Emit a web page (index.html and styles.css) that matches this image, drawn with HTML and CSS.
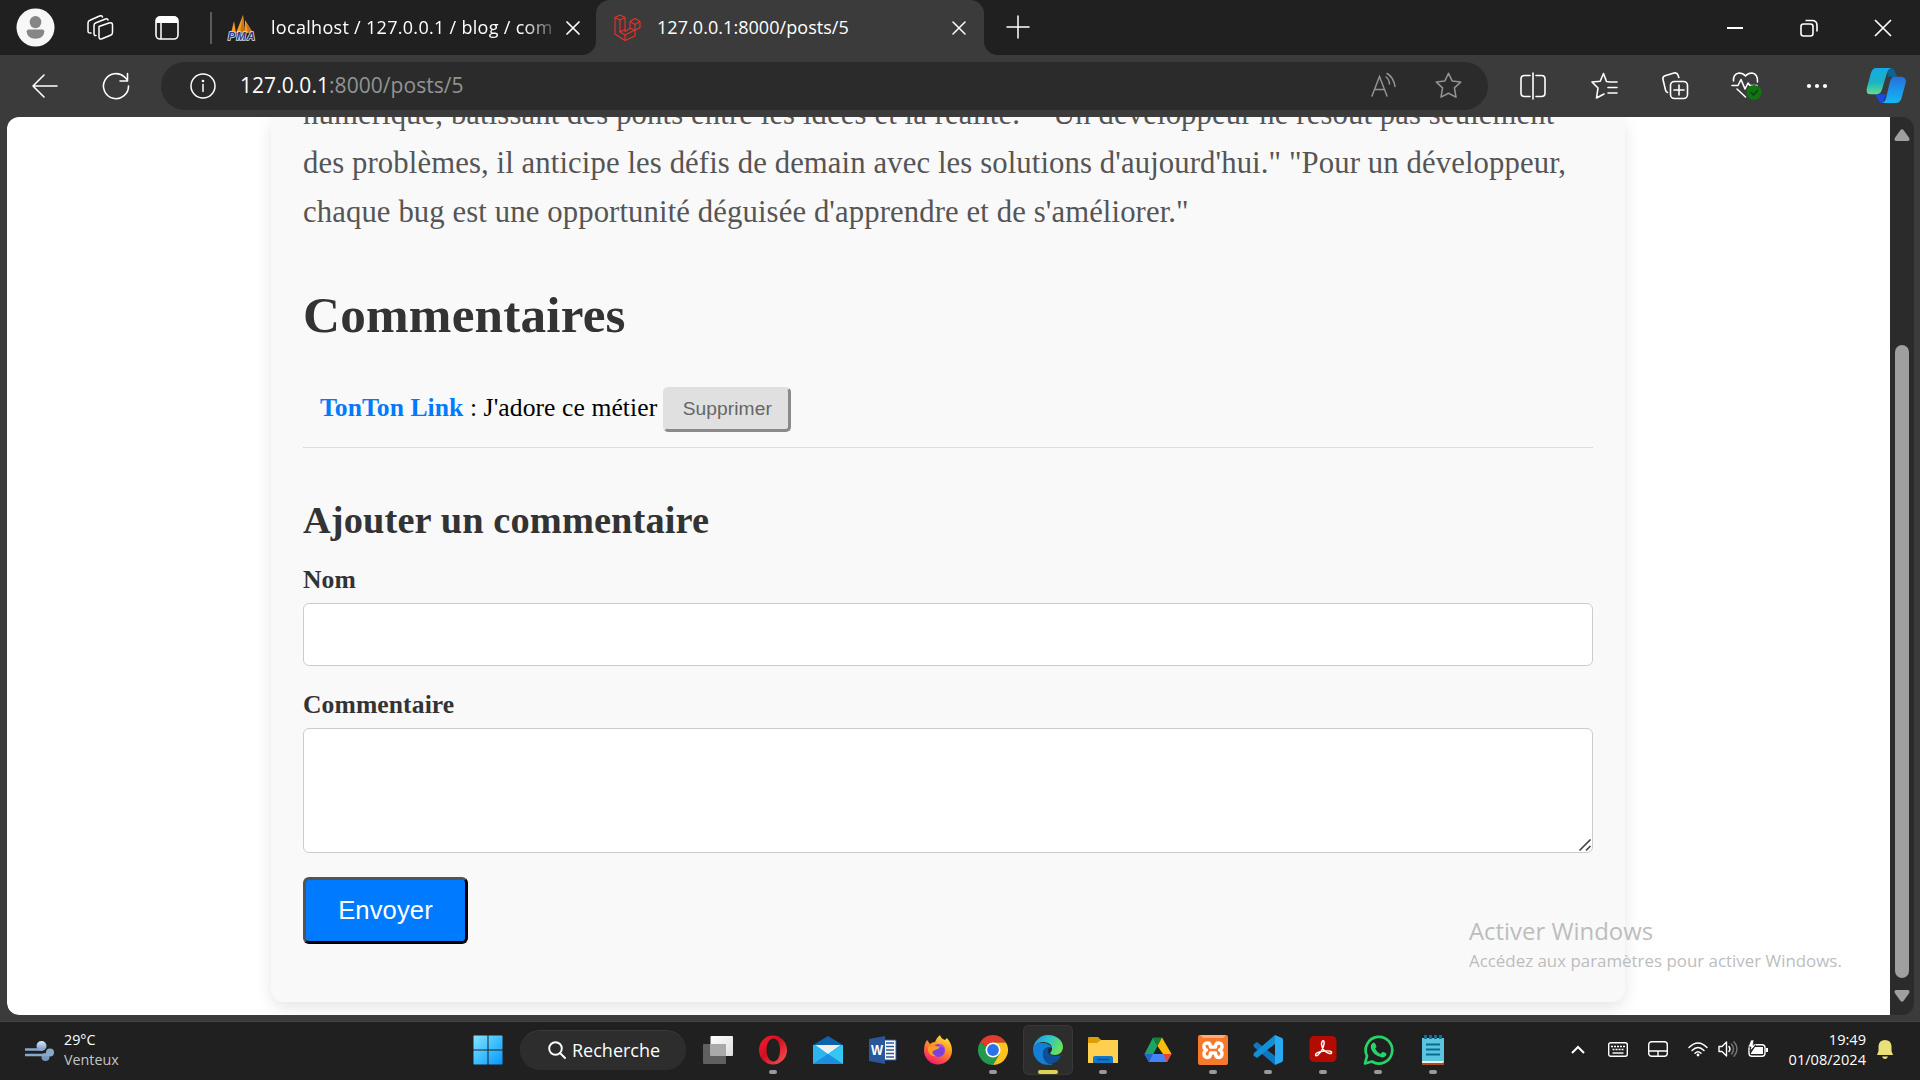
FILE: index.html
```html
<!DOCTYPE html>
<html lang="fr">
<head>
<meta charset="utf-8">
<title>127.0.0.1:8000/posts/5</title>
<link rel="stylesheet" href="styles.css">
</head>
<body>
<div class="screen">
  <header class="tabstrip">
    <div class="tabstrip-tools">
      <svg class="avatar" viewBox="0 0 40 47" width="39" height="39" preserveAspectRatio="none"><ellipse cx="20" cy="23.500" rx="19.500" ry="23" fill="#f7f7f7"/><ellipse cx="20" cy="17" rx="6" ry="7.500" fill="#868686"/><path d="M11 28q0-2 2-2h14q2 0 2 2c0 6-4 9-9 9s-9-3-9-9z" fill="#868686"/></svg>
      <svg class="tool-workspaces" viewBox="0 0 28 28" width="28" height="28" fill="none" stroke="#fff" stroke-width="1.500" stroke-linejoin="round" stroke-linecap="round"><path d="M13 12.500l10-3.500q3.500-1 3.500 2v7.500q0 2-2 2.700L16 24.800q-3 1-3-2z"/><path d="M10 21.500q-2 .5-2-2V11.500q0-2 2-2.800L19.500 5q2-.7 2.500 1M5 19q-3 .5-3-2V9q0-2 2-2.800L13.500 2q2.500-1 3 1"/></svg>
      <svg class="tool-vertical" viewBox="0 0 24 26" width="24" height="26"><rect x="1" y="2" width="22" height="22" rx="4" fill="none" stroke="#fff" stroke-width="1.600"/><path d="M1 8V6q0-5 5-5h12q5 0 5 5v2z" fill="#fff"/><path d="M6 7v17" stroke="#fff" stroke-width="1.500"/></svg>
      <span class="divider"></span>
    </div>
    <div class="tab">
      <svg viewBox="0 0 28 28" width="28" height="28"><path d="M3 19L6 7l2 12zM8 19L15 1l2 18zM17 19V6l8 13z" fill="#f79a1e"/><path d="M12 19L15 1l2 18zM20 19L18 8l7 11z" fill="#c9761a"/><text x="0" y="26" textLength="27" class="pma">PMA</text></svg>
      <span class="tab-title tab-title-fade">localhost / 127.0.0.1 / blog / com</span>
      <svg viewBox="0 0 14 14" width="14" height="14" stroke="#fff" stroke-width="1.700" stroke-linecap="round"><path d="M1 1l12 12M13 1L1 13"/></svg>
    </div>
    <div class="tab tab-active">
      <svg viewBox="0 0 27 27" width="27" height="27" fill="none" stroke="#e8342b" stroke-width="1.100" stroke-linejoin="round"><path d="M1 3.500L6 1l5 2.500v14l5-3V7.500L21 4.500l5 3v6l-5 3v5.500l-10 4.500L1 20z"/><path d="M1 3.500L6 6l5-2.500M6 6v12l5 3 10-5M11 21v5M16 7.500l5 3 5-3M21 10.500v6l-5-2.500M6 18l5-2.500"/></svg>
      <span class="tab-title">127.0.0.1:8000/posts/5</span>
      <svg class="tab-close" viewBox="0 0 14 14" width="14" height="14" stroke="#fff" stroke-width="1.500" stroke-linecap="round"><path d="M1 1l12 12M13 1L1 13"/></svg>
    </div>
    <svg class="new-tab" viewBox="0 0 24 24" width="24" height="24" stroke="#fff" stroke-width="1.500" stroke-linecap="round"><path d="M12 1v22M1 12h22"/></svg>
    <div class="window-controls">
      <svg viewBox="0 0 16 16" width="16" height="16" stroke="#fff" stroke-width="2"><path d="M0 8h16"/></svg>
      <svg viewBox="0 0 16 16" width="16" height="16" fill="none" stroke="#fff" stroke-width="1.600"><rect x="0" y="4" width="12" height="12" rx="2.500"/><path d="M4.500 0.500H11q5 0 5 5v6"/></svg>
      <svg viewBox="0 0 16 16" width="16" height="16" stroke="#fff" stroke-width="1.700"><path d="M0 0l16 16M16 0L0 16"/></svg>
    </div>
  </header>

  <nav class="toolbar">
    <svg class="back" viewBox="0 0 26 24" width="26" height="24" fill="none" stroke="#fff" stroke-width="1.600" stroke-linecap="round" stroke-linejoin="round"><path d="M25 12H1M12 1L1 12l11 11"/></svg>
    <svg class="reload" viewBox="0 0 28 28" width="28" height="28" fill="none" stroke="#fff" stroke-width="1.600" stroke-linecap="round" stroke-linejoin="round"><path d="M26.500 14A12.500 12.500 0 1 1 22.500 5l3 3M25.500 1.500V9H18"/></svg>
    <div class="omnibox">
      <svg viewBox="0 0 26 26" width="26" height="26" fill="none" stroke="#fff" stroke-width="1.500"><circle cx="13" cy="13" r="12"/><path d="M13 11.500v7" stroke-linecap="round"/><circle cx="13" cy="8" r=".6" fill="#fff"/></svg>
      <span class="url"><b>127.0.0.1</b>:8000/posts/5</span>
      <svg class="read" viewBox="0 0 26 26" width="26" height="26" fill="none" stroke="#939393" stroke-width="1.500" stroke-linecap="round"><path d="M1 23L8.500 3.500 16 23M3.500 16.500h10M15 4q3 2 3.500 7M16 .500q6.500 3.500 8 13"/></svg>
      <svg class="star" viewBox="0 0 26 26" width="27" height="27" fill="none" stroke="#939393" stroke-width="1.500" stroke-linejoin="round"><path d="M13 1.200l3.500 7.400 8.200 1.100-6 5.600 1.500 8.900L13 20.500l-7.200 3.700 1.500-8.900-6-5.600 8.200-1.100z"/></svg>
    </div>
    <div class="toolbar-actions">
      <span class="action"><svg viewBox="0 0 28 28" width="28" height="28" fill="none" stroke="#fff" stroke-width="1.600" stroke-linecap="round"><path d="M14 1v26M11 3.500H5.500Q2 3.500 2 7v14q0 3.500 3.500 3.500H11M17 3.500h5.500Q26 3.500 26 7v14q0 3.500-3.500 3.500H17"/></svg></span>
      <span class="action"><svg viewBox="0 0 28 28" width="28" height="28" fill="none" stroke="#fff" stroke-width="1.600" stroke-linecap="round" stroke-linejoin="round"><path d="M20 10l-3.500-.5L13.500 1.500 10.200 9.200 2 10l6 6-1.500 10 7.500-4M19 10h8M18 15.500h9M18 21h9"/></svg></span>
      <span class="action"><svg viewBox="0 0 28 28" width="28" height="28" fill="none" stroke="#fff" stroke-width="1.600" stroke-linecap="round" stroke-linejoin="round"><rect x="9.500" y="9.500" width="17" height="17" rx="4"/><path d="M18 13v10M13 18h10M6.500 20.500q-1.500-.3-2-2.500L2 7.500q-.7-3 2-3.800L13 1q3-.7 4 2l.8 2.500"/></svg></span>
      <span class="action"><svg viewBox="0 0 30 30" width="30" height="30" fill="none" stroke="#fff" stroke-width="1.600" stroke-linecap="round" stroke-linejoin="round"><path d="M2.500 10Q2 3 8 2q4 0 6.500 3Q17 2 21 2q6 1 5.500 9M6 18l8.500 8M1 14.500h6l3-6 4 9.500 3-6 2 2.500h7"/><circle cx="23" cy="21.500" r="7.500" fill="#10750f" stroke="none"/><path d="M20 21.500l2.500 2.500 4-4.500" stroke="#173b17"/></svg></span>
      <span class="action"><svg viewBox="0 0 28 28" width="28" height="28" fill="#fff"><circle cx="6" cy="14" r="2.100"/><circle cx="14" cy="14" r="2.100"/><circle cx="22" cy="14" r="2.100"/></svg></span>
      <svg class="copilot" viewBox="0 0 40 40" width="40" height="39" preserveAspectRatio="none">
        <defs><linearGradient id="cpa" x2="0" y2="1"><stop stop-color="#18a8e8"/><stop offset=".55" stop-color="#19b4c4"/><stop offset="1" stop-color="#64dd8c"/></linearGradient><linearGradient id="cpb" x2="0" y2="1"><stop stop-color="#2670dc"/><stop offset="1" stop-color="#14b8f5"/></linearGradient></defs>
        <path d="M20 2h4q4 0 5 4l2 5h-9z" fill="#0b6591"/><path d="M9 29h11l-3 9q-4 0-5-4z" fill="#1b49dc"/>
        <path d="M10 2h15q-3 1-4 5l-5 17q-1.500 5-6 5H5q-6 0-4-7L5 7q1.500-5 5-5z" fill="url(#cpa)"/><path d="M28 11h7q6 0 4.500 7l-4 15q-1.500 5-6 5H16q3-1 4-5l4-17q1.500-5 4-5z" fill="url(#cpb)"/>
      </svg>
    </div>
  </nav>

  <div class="viewport">
    <main class="page">
      <article class="card">
        <p class="body-text">numérique, bâtissant des ponts entre les idées et la réalité." "Un développeur ne résout pas seulement<br>des problèmes, il anticipe les défis de demain avec les solutions d'aujourd'hui." "Pour un développeur,<br>chaque bug est une opportunité déguisée d'apprendre et de s'améliorer."</p>
        <h1>Commentaires</h1>
        <div class="comment"><span class="comment-text"><strong>TonTon Link</strong> : J'adore ce métier</span><button class="btn-delete">Supprimer</button></div>
        <h3>Ajouter un commentaire</h3>
        <label for="nom">Nom</label>
        <input id="nom" type="text">
        <label class="label-next" for="msg">Commentaire</label>
        <div class="area"><textarea id="msg"></textarea><svg class="grip" viewBox="0 0 12 12" width="12" height="12" stroke="#444" stroke-width="1.700"><path d="M.5 11.500l11-11M7 11.500L11.500 7"/></svg></div>
        <button class="btn-send">Envoyer</button>
      </article>
    </main>
    <div class="scrollbar">
      <svg viewBox="0 0 16 12" width="16" height="12"><path d="M6.500 1q1.500-1.500 3 0l5.700 8q1 3-1.500 3H2.300q-2.500 0-1.500-3z" fill="#9f9f9f"/></svg>
      <span class="thumb"></span>
      <svg viewBox="0 0 16 12" width="16" height="12"><path d="M6.500 11q1.500 1.500 3 0l5.700-8q1-3-1.500-3H2.300Q-.2 0 .8 3z" fill="#9f9f9f"/></svg>
    </div>
  </div>

  <footer class="taskbar">
    <div class="weather">
      <svg viewBox="0 0 30 22" width="30" height="22"><defs><linearGradient id="wx" x2="0" y2="1"><stop stop-color="#d9e6fa"/><stop offset="1" stop-color="#6e93bd"/></linearGradient></defs><circle cx="16.500" cy="6" r="5" fill="url(#wx)"/><circle cx="20.500" cy="17" r="4" fill="#7398b8"/><circle cx="25" cy="12.500" r="4" fill="#8aa9c9"/><path d="M0 9.500h18M0 15h23" stroke="#86a8cc" stroke-width="2.500"/></svg>
      <p><span>29°C</span><span class="dim">Venteux</span></p>
    </div>
    <div class="apps">
      <div class="app"><svg viewBox="0 0 30 30" width="30" height="30"><defs><linearGradient id="win" gradientUnits="userSpaceOnUse" x1="0" y1="0" x2="30" y2="30"><stop stop-color="#8be3ff"/><stop offset=".5" stop-color="#3fc0ff"/><stop offset="1" stop-color="#0794ff"/></linearGradient></defs><path d="M1 .5h13.500v14H.5V1zM15.500.5H29l.5.500v13.500h-14zM.5 15.500h14v14H1l-.5-.5zM15.500 15.500h14V29l-.5.500H15.500z" fill="url(#win)"/></svg></div>
      <div class="search"><svg viewBox="0 0 18 18" width="18" height="18" fill="none" stroke="#fff" stroke-width="1.900" stroke-linecap="round"><circle cx="7.500" cy="7.500" r="6.300"/><path d="M12 12l5 5"/></svg><span>Recherche</span></div>
      <div class="app"><svg viewBox="0 0 30 30" width="30" height="30"><defs><linearGradient id="tv" x2="1" y2="1"><stop stop-color="#fff"/><stop offset="1" stop-color="#ddd"/></linearGradient></defs><rect y="9" width="23" height="20" rx="1" fill="#606060"/><rect x="7.500" y="1" width="22.500" height="20" rx="1" fill="url(#tv)"/><path d="M7.500 9H22q1 0 1 1v11H8.500q-1 0-1-1z" fill="#aaa"/></svg></div>
      <div class="app run"><svg viewBox="0 0 30 30" width="30" height="30"><defs><linearGradient id="op" x2="1" y2="1"><stop stop-color="#ff1b2d"/><stop offset=".45" stop-color="#d00f20"/><stop offset="1" stop-color="#ff5b5b"/></linearGradient></defs><path fill-rule="evenodd" d="M15 .5a14 14.500 0 1 1 0 29a14 14.500 0 1 1 0-29zM15.500 3.500c-4 0-7 5-7 11.500s3 11.500 7 11.500 6.500-5 6.500-11.500-2.500-11.500-6.500-11.500z" fill="url(#op)"/></svg></div>
      <div class="app"><svg viewBox="0 0 30 30" width="30" height="30"><path d="M0 10L15 1l15 9v4H0z" fill="#0c62ad"/><path d="M0 10h30v19H0z" fill="#2bb4ee"/><path d="M2.500 10h25L15 19z" fill="#eee"/><path d="M30 10v19L15 19z" fill="#35c6f4"/><path d="M0 29l15-10L30 29z" fill="#1b8fe0"/></svg></div>
      <div class="app"><svg viewBox="0 0 30 30" width="30" height="30"><path d="M16 5h12v20H16z" fill="#fff" stroke="#2b579a"/><path d="M18 8h8M18 11.500h8M18 15h8M18 18.500h8M18 22h8" stroke="#2b579a" stroke-width="1.500"/><path d="M1 4l16-3v28L1 26z" fill="#2b579a"/><text x="3" y="20" textLength="12" lengthAdjust="spacingAndGlyphs" class="word">W</text></svg></div>
      <div class="app"><svg viewBox="0 0 30 30" width="30" height="30"><defs><linearGradient id="ff" x1=".8" x2=".3" y2="1"><stop stop-color="#fff044"/><stop offset=".4" stop-color="#ff9a20"/><stop offset="1" stop-color="#f5156c"/></linearGradient></defs><path d="M4 5l3 4q2-2 5-2 1-4 5-7 1 4 5 5l2-2q5 6 5 12a14 14 0 0 1-28 1Q1 9 4 5z" fill="url(#ff)"/><circle cx="15.500" cy="15.500" r="6.500" fill="#7a42dc"/><path d="M5 12q5-3 8-1l4 1q-2 3-5 3l-3 2q1 3 4 4-6 1-8-5z" fill="#ff9a24"/><path d="M16 9q5 0 6 5-3-3-6-2z" fill="#bb45f4"/></svg></div>
      <div class="app run"><svg viewBox="0 0 30 30" width="30" height="30"><path d="M15 15L2 7.500A15 15 0 0 1 28 7.500H15z" fill="#e33b2e"/><path d="M15 15L2 7.500A15 15 0 0 0 15 30l6.500-11.300z" fill="#23994d"/><path d="M15 15l0-7.500h13A15 15 0 0 1 15 30l6.500-11z" fill="#fcc31e"/><circle cx="15" cy="15" r="7.500" fill="#fff"/><circle cx="15" cy="15" r="5.900" fill="#2b72e8"/></svg></div>
      <div class="app run active"><svg viewBox="0 0 30 30" width="30" height="30"><defs><linearGradient id="eg" x2="1" y2=".4"><stop stop-color="#188ee0"/><stop offset=".5" stop-color="#2bc1d5"/><stop offset="1" stop-color="#66e15c"/></linearGradient></defs><path d="M0 15a15 15 0 0 1 15-15c9 0 15 6 15 12 0 5-4 8-8 8-3 0-5-1-5-2 0-1 2-2 2-5 0-4-5-6-9-6-6 0-9 4-10 8z" fill="url(#eg)"/><path d="M0 15C0 10 5 7 10 8c4 0 8 2 9 5-4-2-9 0-9 6 0 5 4 10 10 10A15 15 0 0 1 0 15z" fill="#157fd4"/><path d="M10 20c-1-5 3-8 7-7 2 1 1 4 0 5 0 3 7 4 11 2-1 5-7 9-12 9-3-1-6-5-6-9z" fill="#104e9a"/><path d="M19 13q-4-1-4 3 0 3 3 4-1-1-1-2 2-2 2-5z" fill="#222a31"/></svg></div>
      <div class="app run"><svg viewBox="0 0 30 30" width="30" height="30"><path d="M0 3q0-1 1-1h9l3 3v6H0z" fill="#dc9d08"/><path d="M0 8h9l4-3h17v23H0z" fill="#ffd04f"/><path d="M5 28v-5q0-2 2-2h16q2 0 2 2v5z" fill="#1077c9"/><path d="M9 24.500h12" stroke="#0c4f89" stroke-width="1.500"/></svg></div>
      <div class="app"><svg viewBox="0 0 30 30" width="30" height="30"><path d="M10 2.500L1.500 19 6 27l8.500-16z" fill="#1fa463"/><path d="M10 2.500h9L14.500 11z" fill="#14803d"/><path d="M19 2.500L28.500 19H20L14.500 11z" fill="#fbbc08"/><path d="M1.500 19h27L24 27H6z" fill="#4285f4"/><path d="M1.500 19H10l-4 8z" fill="#2562cc"/><path d="M20 19h8.500L24 27z" fill="#ea4335"/></svg></div>
      <div class="app run"><svg viewBox="0 0 30 30" width="30" height="30"><rect width="30" height="30" rx="2" fill="#f77a2c"/><path d="M2 0h26l-3 3H5z" fill="#ffad78"/><path d="M9.500 8q-4 0-3.500 4 0 2 2.500 3-2.500 1-2.500 3.500 0 4 3.500 4 3 0 3-4.500h5q0 4.500 3 4.500 3.500 0 3.500-4 0-2.500-2.500-3.500 2.500-1 2.500-3 .5-4-3.500-4-3 0-3 4h-5q0-4-3-4z" fill="none" stroke="#fff" stroke-width="3.400" stroke-linejoin="round"/></svg></div>
      <div class="app run"><svg viewBox="0 0 30 30" width="30" height="30"><path d="M1 9l3-2 18 14v9L1 12q-1-2 0-3z" fill="#0d78bf"/><path d="M1 21l3 2L22 9V0L1 18q-1 2 0 3z" fill="#148ed6"/><path d="M22 0l7 3q1 .5 1 2v20q0 1.500-1 2l-7 3z" fill="#2aa8f2"/></svg></div>
      <div class="app run"><svg viewBox="0 0 30 30" width="30" height="30"><rect x="1.500" y="1" width="27" height="26" rx="4.500" fill="#b30b00"/><path d="M14.500 6q2-1 1.500 3-1 6-6 11-2 1.500-2.500 0 0-3 9-4 6-.5 7 1 .5 2-2 1.500-7-2-8-9-.2-2 1-3.500z" fill="none" stroke="#fff" stroke-width="1.500"/></svg></div>
      <div class="app run"><svg viewBox="0 0 30 30" width="30" height="30"><path d="M2 28.500l2-7.500A13.300 13.300 0 1 1 9 26.500z" fill="none" stroke="#25d366" stroke-width="2.700" stroke-linejoin="round"/><path d="M9.500 8q2-1.500 3 1l1 2.500q0 1-1.500 2 2 4 5.500 5.500l2-2q1-.5 3.500 1.300 1 .7 0 2.500-2 2-4.500 1.500Q10 20.500 7.800 13q-.5-3.500 1.700-5z" fill="#25d366"/></svg></div>
      <div class="app run"><svg viewBox="0 0 30 30" width="30" height="30"><path d="M4 25h22v5H4z" fill="#a8521b"/><path d="M4 3h22v23q0 2-2 2H4z" fill="#eee"/><path d="M4 3h22v23H4z" fill="#5dc4e0"/><path d="M8 9.500h14M8 14.500h14M8 19.500h14" stroke="#086b94" stroke-width="1.800"/><path d="M7.500 0v4M12.500 0v4M17.500 0v4M22.500 0v4" stroke="#107092" stroke-width="3"/></svg></div>
    </div>
    <div class="tray">
      <svg viewBox="0 0 14 9" width="14" height="9" fill="none" stroke="#fff" stroke-width="2"><path d="M1 8l6-6 6 6"/></svg>
      <svg class="kbd" viewBox="0 0 20 15" width="20" height="15" fill="none" stroke="#fff" stroke-width="1.400"><rect x=".7" y=".7" width="18.600" height="13.600" rx="2"/><path d="M3 4.500h14M4.500 7.500h11" stroke-dasharray="2 1"/><path d="M4.500 11h11"/></svg>
      <svg class="pad" viewBox="0 0 20 16" width="20" height="16" fill="none" stroke="#fff" stroke-width="1.400"><rect x=".7" y=".7" width="18.600" height="14.600" rx="3"/><path d="M1 10h18M10 10v5"/></svg>
      <svg class="wifi" viewBox="0 0 20 15" width="20" height="15" fill="none" stroke="#fff" stroke-width="1.500" stroke-linecap="round"><path d="M1 5.500q9-9 18 0M4 8.500q6-6 12 0M7 11.200q3-3 6 0"/><circle cx="10" cy="13" r="1.400" fill="#fff" stroke="none"/></svg>
      <svg class="vol" viewBox="0 0 20 16" width="20" height="16" fill="none" stroke="#fff" stroke-width="1.400" stroke-linecap="round" stroke-linejoin="round"><path d="M1 5.500h3L8.500 1v14L4 10.500H1zM11 5.500q2 2.500 0 5"/><path d="M13.500 3q4 5 0 10M16 .8q6 7.200 0 14.400" stroke="#777"/></svg>
      <svg class="bat" viewBox="0 0 20 16" width="20" height="16"><rect x="1" y="3.700" width="16" height="11.600" rx="3" fill="none" stroke="#fff" stroke-width="1.400"/><path d="M3 12l4-6h8v7H3zM18 7h2v4h-2z" fill="#fff"/><path d="M3-1L0 6h3l-1 4 6-6H5l1-5z" fill="#fff" stroke="#202020" stroke-width=".7"/></svg>
      <p class="clock"><span>19:49</span><span>01/08/2024</span></p>
      <svg class="bell" viewBox="0 0 16 19" width="16" height="19" fill="#e9e07a"><path d="M8 0q6 0 6.500 6v5l1.500 4H0l1.500-4V6Q2 0 8 0zM5 16.500h6q-1 2.500-3 2.500t-3-2.500z"/></svg>
    </div>
  </footer>
  <div class="watermark"><p class="wm-title">Activer Windows</p><p class="wm-sub">Accédez aux paramètres pour activer Windows.</p></div>
</div>
</body>
</html>
```
FILE: styles.css
```css
* { box-sizing: border-box; }
body { margin: 0; background: #3b3b3b; overflow: hidden; font-family: "Open Sans", "Noto Sans", sans-serif; color: #fff; }
p, h1, h3 { margin: 0; }
svg { display: block; flex: none; overflow: visible; }
.screen { position: relative; width: 1920px; height: 1080px; display: flex; flex-direction: column; }

/* Tab strip */
.tabstrip { height: 55px; background: #3b3b3b; display: flex; flex: none; }
.tabstrip-tools { width: 212px; background: #202020; display: flex; align-items: center; padding-left: 16px; }
.tool-workspaces { margin-left: 31px; }
.tool-vertical { margin-left: 41px; }
.divider { width: 2px; height: 32px; background: #5c5c5c; margin-left: 31px; }
.tab { width: 384px; background: #202020; border-radius: 0 0 14px 0; display: flex; align-items: center; padding-left: 16px; }
.tab-title { font-size: 18px; line-height: 24px; letter-spacing: 0.050px; white-space: nowrap; margin-left: 16px; margin-top: -1px; }
.tab-title-fade { width: 281px; margin-left: 15px; margin-right: 14px; letter-spacing: 0.300px; overflow: hidden; -webkit-mask-image: linear-gradient(90deg, #000 90%, rgba(0, 0, 0, 0.250)); }
.tab-active { width: 388px; background: #3b3b3b; border-radius: 14px 14px 0 0; padding-left: 18px; box-shadow: 0 -14px 0 14px #202020; clip-path: inset(0); }
.tab-close { margin-left: auto; margin-right: 18px; }
.new-tab { box-sizing: content-box; background: #202020; padding: 15px 0 16px 22px; border-radius: 0 0 0 14px; }
.window-controls { flex: 1; background: #202020; display: flex; align-items: center; justify-content: flex-end; gap: 58px; padding-right: 29px; }
.pma { font: italic bold 11px "Liberation Sans", sans-serif; fill: #363b80; stroke: #ddd; stroke-width: 1.600px; paint-order: stroke; }

/* Address bar */
.toolbar { height: 62px; flex: none; display: flex; align-items: center; padding: 0 14px 1px 32px; }
.reload { margin-left: 44px; }
.omnibox { width: 1327px; height: 48px; flex: none; margin-left: 31px; border-radius: 24px; background: #2b2b2b; display: flex; align-items: center; padding: 0 26px 0 29px; }
.url { font-size: 21px; margin-left: 24px; margin-top: -2px; color: #939393; line-height: 28px; letter-spacing: 0.050px; }
.url b { font-weight: 400; color: #fff; }
.read { margin-left: auto; margin-right: 38px; }
.toolbar-actions { flex: none; display: flex; align-items: center; padding-left: 9.500px; }
.action { width: 71px; flex: none; display: flex; justify-content: center; }
.copilot { margin-left: 13px; }

/* Web page */
.viewport { height: 898px; flex: none; margin: 0 6px 0 7px; display: flex; border-radius: 12px; overflow: hidden; background: #2b2b2b; }
.page { width: 1883px; height: 898px; background: #fff; display: flex; justify-content: center; overflow: hidden; font-family: "Liberation Serif", "Times New Roman", serif; color: #000; border-radius: 0 0 0 12px; }
.card { width: 1354px; height: 885px; padding: 0 32px; margin: 0 1px 0 0; background: #f9f9f9; border-radius: 0 0 13px 13px; box-shadow: 0 6px 16px rgba(0, 0, 0, 0.1); }
.body-text { margin-top: -27.400px; font-size: 30.720px; line-height: 49.150px; letter-spacing: 0.105px; color: #555; white-space: nowrap; }
h1 { font-size: 51.200px; line-height: 60px; letter-spacing: 0.200px; color: #333; margin-top: 48.400px; }
.comment { display: flex; align-items: center; height: 77px; margin-top: 25.550px; padding: 0 17px; font-size: 25.600px; border-bottom: 1px solid #ddd; }
.comment-text { margin-top: -2px; letter-spacing: 0.080px; }
.comment strong { color: #007bff; }
.btn-delete { width: 128px; height: 45px; margin-left: 6px; padding: 0; border: 3px solid; border-color: #e0e0e0 #8a8a8a #8a8a8a #e0e0e0; border-radius: 5px; background: #e0e0e0; color: #666; font: 19.200px "Liberation Sans", Arial, sans-serif; letter-spacing: 0.080px; }
h3 { font-size: 38.400px; line-height: 44px; letter-spacing: 0.110px; color: #333; margin-top: 50px; }
label { display: block; font-size: 25.600px; line-height: 30px; letter-spacing: 0.100px; font-weight: 700; color: #333; margin-top: 23px; }
.label-next { margin-top: 24px; }
input, textarea { display: block; width: 100%; margin: 8px 0 0; padding: 0; border: 1px solid #ccc; border-radius: 6px; background: #fff; resize: none; }
input { height: 63px; }
textarea { height: 125px; }
.area { position: relative; }
.grip { position: absolute; right: 2px; bottom: 2px; }
.btn-send { display: block; width: 165px; height: 67px; margin-top: 24px; padding: 0; border: 3px solid; border-color: #545454 #000 #000 #545454; border-radius: 6px; background: #007bff; color: #fff; font: 25.600px "Liberation Sans", Arial, sans-serif; letter-spacing: 0.120px; }
.scrollbar { width: 24px; display: flex; flex-direction: column; align-items: center; justify-content: space-between; padding: 12px 0 13px; }
.thumb { width: 14px; height: 633px; margin-top: 192px; border-radius: 7px; background: #9f9f9f; }

/* Taskbar */
.taskbar { height: 59px; margin-top: 6px; background: #202020; border-top: 1px solid #444; display: flex; align-items: center; flex: none; }
.weather { width: 460px; display: flex; align-items: center; padding-left: 25px; }
.weather p { margin-left: 9px; font-size: 14.300px; line-height: 20px; margin-top: -3px; }
.weather span, .clock span { display: block; }
.weather .dim { color: #c4c4c4; }
.apps { display: flex; align-items: center; height: 58px; padding-bottom: 2px; }
.app { width: 55px; height: 50px; display: flex; flex-direction: column; align-items: center; padding-top: 10px; }
.app.run::after { content: ""; width: 8px; height: 4px; margin-top: 5px; border-radius: 2px; background: #9a9a9a; }
.app.active { width: 50px; margin: 0 2.500px; background: #2d2d2d; border-radius: 6px; box-shadow: inset 0 0 0 1px #383838; }
.app.active::after { width: 20px; background: #dcd34e; }
.search { width: 166px; height: 40px; margin: 0 4.500px 0 5px; border-radius: 20px; background: #2d2d2d; border-top: 1px solid #3a3a3a; display: flex; align-items: center; gap: 6px; padding-left: 28px; padding-bottom: 1px; font-size: 18px; }
.word { font: bold 14px "Liberation Sans", sans-serif; fill: #fff; }
.tray { margin-left: auto; display: flex; align-items: center; padding: 0 27px 4px 0; }
.kbd { margin-left: 23px; }
.pad { margin-left: 20px; }
.wifi { margin-left: 20px; }
.vol { margin-left: 10px; }
.bat { margin-left: 10px; }
.clock { width: 90px; margin-left: 8px; margin-top: -1px; text-align: right; font-size: 14.600px; line-height: 20px; }
.bell { margin-left: 11px; }

/* System notice floating above the page */
.watermark { position: absolute; left: 1469px; top: 914px; color: #bdbdbd; white-space: nowrap; }
.wm-title { font-size: 23.900px; line-height: 34px; }
.wm-sub { font-size: 16.900px; line-height: 25px; }
```
